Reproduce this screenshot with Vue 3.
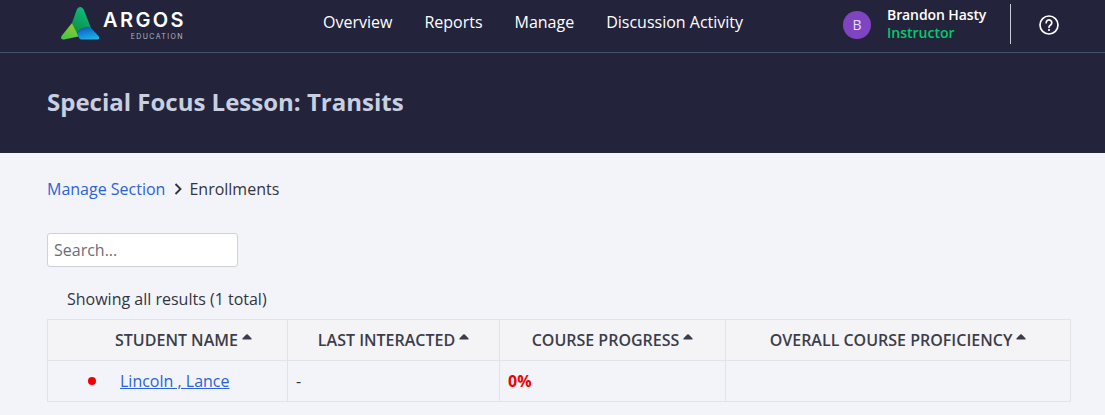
<script setup>
const navItems = ['Overview', 'Reports', 'Manage', 'Discussion Activity']
const columns = [
  { label: 'STUDENT NAME', width: '240px', pad: 'pad-name' },
  { label: 'LAST INTERACTED', width: '212px' },
  { label: 'COURSE PROGRESS', width: '226px' },
  { label: 'OVERALL COURSE PROFICIENCY', width: '345px' }
]
</script>

<template>
  <div class="page">
    <header class="hero">
      <div class="topbar">
        <div class="logo">
          <svg class="mark" width="40" height="36" viewBox="0 0 40 36" aria-hidden="true">
            <defs>
              <linearGradient id="gTop" x1="0.7" y1="0" x2="0.3" y2="1">
                <stop offset="0" stop-color="#12bb82" />
                <stop offset="1" stop-color="#0a8f45" />
              </linearGradient>
              <linearGradient id="gLeft" x1="0.8" y1="0" x2="0.1" y2="1">
                <stop offset="0" stop-color="#9ccb26" />
                <stop offset="1" stop-color="#3cc44c" />
              </linearGradient>
              <linearGradient id="gBlue" x1="0.3" y1="0" x2="0.7" y2="1">
                <stop offset="0" stop-color="#0a5cc0" />
                <stop offset="1" stop-color="#1cb4ea" />
              </linearGradient>
            </defs>
            <path d="M17 4Q20 0 23.500 4L31 23Q23 21 17 28L12 18Z" fill="url(#gTop)" />
            <path d="M12 18L17 28L18.500 31.500L4 34.500Q0 35 1.500 31Z" fill="url(#gLeft)" />
            <path d="M17 28Q23 21 30 22L38.500 31Q40.500 34.500 37 34.500H21Q19 34.500 17 28Z" fill="url(#gBlue)" />
          </svg>
          <div class="wordmark">
            <span class="argos">ARGOS</span>
            <span class="edu">EDUCATION</span>
          </div>
        </div>
        <nav class="nav">
          <a v-for="item in navItems" :key="item" class="nav-link">{{ item }}</a>
        </nav>
        <div class="user">
          <span class="avatar">B</span>
          <div class="user-text">
            <span class="user-name">Brandon Hasty</span>
            <span class="user-role">Instructor</span>
          </div>
          <span class="divider"></span>
          <svg class="help" width="22" height="22" viewBox="0 0 22 22" aria-hidden="true">
            <circle cx="11" cy="11" r="9" fill="none" stroke="#fff" stroke-width="1.700" />
            <path d="M8.200 8.700a2.800 2.800 0 1 1 4.400 2.300c-1 .7-1.600 1.200-1.600 2.300" fill="none" stroke="#fff" stroke-width="1.700" stroke-linecap="round" />
            <circle cx="11" cy="16" r="1.050" fill="#fff" />
          </svg>
        </div>
      </div>
      <h1 class="title">Special Focus Lesson: Transits</h1>
    </header>

    <main class="content">
      <div class="crumbs">
        <a class="crumb-link">Manage Section</a>
        <svg class="chev" width="9" height="12" viewBox="0 0 9 12" aria-hidden="true">
          <path d="M1.500 1L6.500 6L1.500 11" fill="none" stroke="#33343f" stroke-width="1.900" />
        </svg>
        <span class="crumb-current">Enrollments</span>
      </div>

      <input class="search" type="text" placeholder="Search..." />

      <p class="count">Showing all results (1 total)</p>

      <table class="grid">
        <colgroup>
          <col v-for="c in columns" :key="c.label" :style="{ width: c.width }" />
        </colgroup>
        <thead>
          <tr>
            <th v-for="c in columns" :key="c.label" :class="c.pad">
              {{ c.label }}<svg class="caret" width="10" height="6" viewBox="0 0 10 6" aria-hidden="true"><path d="M4.200 .6Q5 0 5.800 .6L9.600 4.600Q10 5.500 9 5.500H1Q0 5.500 .4 4.600Z" fill="#3c3d4b" /></svg>
            </th>
          </tr>
        </thead>
        <tbody>
          <tr>
            <td class="name-cell">
              <span class="dot"></span>
              <a class="student">Lincoln , Lance</a>
            </td>
            <td class="plain">-</td>
            <td class="progress plain">0%</td>
            <td></td>
          </tr>
        </tbody>
      </table>
    </main>
  </div>
</template>

<style>
html, body { margin: 0; background: #f3f4f9; }
</style>

<style scoped>
.page {
  width: 1105px;
  height: 415px;
  overflow: hidden;
  background: #f3f4f9;
  font-family: "Open Sans", sans-serif;
  font-size: 16px;
  color: #33343f;
}
.hero {
  background: #23233c;
  height: 153px;
}
.topbar {
  display: flex;
  align-items: center;
  height: 52px;
  border-bottom: 1px solid #46536f;
  padding-left: 60px;
  box-sizing: content-box;
}
.logo {
  display: flex;
  align-items: flex-start;
  width: 263px;
  height: 52px;
}
.mark { margin-top: 5px; margin-right: 3px; }
.wordmark {
  display: flex;
  flex-direction: column;
  align-items: flex-end;
  width: 81px;
  margin-top: 10px;
}
.argos {
  font-family: Inter, sans-serif;
  font-weight: 600;
  font-size: 20px;
  line-height: 20px;
  letter-spacing: 2.400px;
  margin-right: -2px;
  color: #fff;
}
.edu {
  font-family: Inter, sans-serif;
  font-size: 7px;
  line-height: 8px;
  margin-top: 3px;
  letter-spacing: 1.400px;
  color: #b4b8c4;
}
.nav {
  display: flex;
  gap: 32px;
  width: 520px;
  margin-top: -9px;
}
.nav-link {
  color: #fff;
  font-weight: 500;
  font-size: 16px;
}
.user {
  display: flex;
  align-items: center;
  height: 52px;
  color: #fff;
  margin-top: -2px;
}
.avatar {
  width: 28px;
  height: 28px;
  border-radius: 50%;
  background: #8044c0;
  color: #eadcf8;
  font-size: 14px;
  line-height: 28px;
  text-align: center;
}
.user-text {
  display: flex;
  flex-direction: column;
  margin-left: 16px;
  margin-top: -3px;
  width: 123px;
  font-size: 14px;
  line-height: 18px;
  font-weight: 500;
}
.user-name { font-weight: 600; letter-spacing: -0.100px; }
.user-role { color: #00cb6c; font-weight: 600; }
.divider {
  width: 1px;
  height: 40px;
  background: #c6cbd8;
  margin-top: -2px;
}
.help { margin-left: 27px; }
.title {
  margin: 0;
  padding: 32px 47px 0;
  font-size: 24px;
  line-height: 33px;
  font-weight: 700;
  color: #c8d0e0;
}
.content { padding: 24px 34px 0 47px; }
.crumbs {
  display: flex;
  align-items: center;
  height: 24px;
}
.crumb-link { color: #2c63d6; }
.chev { margin-left: 9px; margin-right: 6px; }
.crumb-current { color: #33343f; }
.search {
  display: block;
  box-sizing: border-box;
  width: 191px;
  height: 34px;
  margin-top: 32px;
  padding: 0 6px;
  border: 1px solid #d0d1d6;
  border-radius: 3px;
  background: #fff;
  font-family: inherit;
  font-size: 16px;
  color: #33343f;
  outline: none;
}
.search::placeholder { color: #6c6d75; opacity: 1; }
.count {
  margin: 0;
  padding: 21px 0 0 20px;
  height: 52px;
  box-sizing: border-box;
  font-size: 16px;
  line-height: 22px;
}
.grid {
  width: 1023px;
  table-layout: fixed;
  border-collapse: collapse;
}
.grid th, .grid td {
  border: 1px solid #e2e3e8;
  height: 41px;
  padding: 0 10px;
  box-sizing: border-box;
}
.grid td.plain { padding-left: 8px; }
.grid th {
  background: #f4f4f6;
  text-align: center;
  font-weight: 600;
  font-size: 16px;
  color: #3c3d4b;
  white-space: nowrap;
}
.grid th.pad-name { padding-left: 67px; text-align: left; }
.caret {
  position: relative;
  top: -6px;
  margin-left: 4px;
  vertical-align: baseline;
  overflow: visible;
}
.dot {
  display: inline-block;
  width: 8px;
  height: 8px;
  border-radius: 50%;
  background: #f00000;
  margin-left: 30px;
  margin-right: 24px;
  vertical-align: 2px;
}
.student {
  color: #2c63d6;
  text-decoration: underline;
}
.progress {
  color: #f00000;
  font-weight: 700;
}
</style>
